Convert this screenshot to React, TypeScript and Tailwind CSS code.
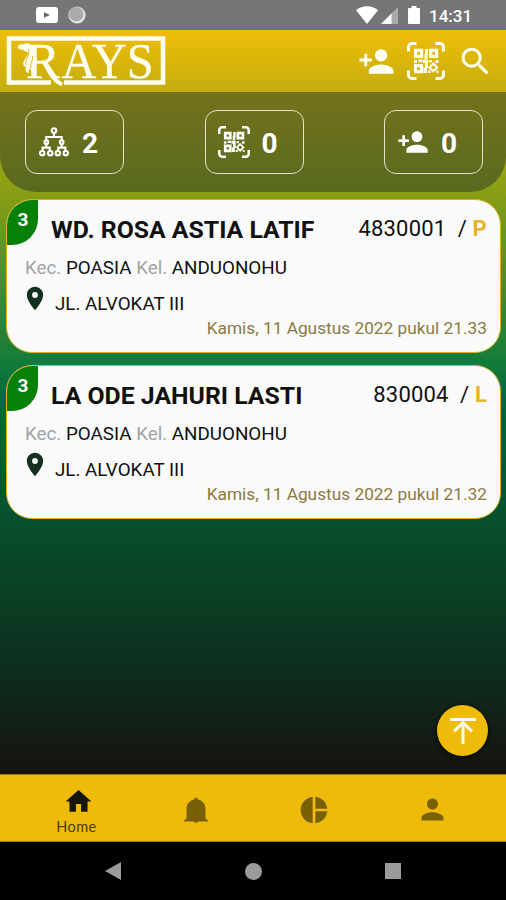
import React from 'react';
import {
  MdHome,
  MdLocationOn,
  MdPerson,
  MdPersonAdd,
  MdPieChart,
  MdSearch,
} from 'react-icons/md';

const members = [
  {
    level: 3,
    name: 'WD. ROSA ASTIA LATIF',
    code: '4830001',
    gender: 'P',
    kec: 'POASIA',
    kel: 'ANDUONOHU',
    address: 'JL. ALVOKAT III',
    date: 'Kamis, 11 Agustus 2022 pukul 21.33',
  },
  {
    level: 3,
    name: 'LA ODE JAHURI LASTI',
    code: '830004',
    gender: 'L',
    kec: 'POASIA',
    kel: 'ANDUONOHU',
    address: 'JL. ALVOKAT III',
    date: 'Kamis, 11 Agustus 2022 pukul 21.32',
  },
];

function QrIcon({ className }: { className?: string }) {
  return (
    <svg viewBox="0 0 38 38" className={className} fill="none" stroke="currentColor">
      <path
        strokeWidth="3"
        d="M1.5 9.5V5a3.5 3.5 0 0 1 3.5-3.5h4.5M28.5 1.5H33A3.5 3.5 0 0 1 36.5 5v4.5M36.5 28.5V33a3.5 3.5 0 0 1-3.5 3.5h-4.5M9.5 36.5H5A3.5 3.5 0 0 1 1.5 33v-4.5"
      />
      <path strokeWidth="3.2" d="M8.6 8.4h6v6h-6zM23.6 8.4h6v6h-6zM8.6 23.6h6v6h-6z" />
      <path
        fill="currentColor"
        stroke="none"
        d="M18 7h3v6h-3zM17.5 12h3v5h-3zM7 18h3v3H7zM11.5 17.5h4v2.8h-4zM16 17.5h5v3.5h-5zM18 20h3v6h-3zM16.5 25.5h3.5v5.5h-3.5zM22 18h3v2.5h-3zM28.5 18h3v3h-3zM29.5 28.5h2V31h-2zM21 28.5h2.5V31H21z"
      />
      <path strokeWidth="2.2" d="m26.3 21.5 3.9 3.9-3.9 3.9-3.9-3.9z" />
    </svg>
  );
}

function TreeIcon() {
  return (
    <svg viewBox="0 0 30 30" className="h-[30px] w-[30px]" fill="none" stroke="currentColor" strokeWidth="2.1">
      <circle cx="15" cy="3.5" r="2.3" />
      <path d="M15 6v4M7.3 13.5V10h15.4v3.5" />
      <circle cx="7.3" cy="15.2" r="1.8" />
      <circle cx="22.7" cy="15.2" r="1.8" />
      <path d="M7.3 17v3M3.6 24v-3.4h7.2V24M22.7 17v3M19.2 24v-3.4h7.2V24" />
      <circle cx="3.2" cy="26.2" r="2.2" />
      <circle cx="11.2" cy="26.2" r="2.2" />
      <circle cx="18.8" cy="26.2" r="2.2" />
      <circle cx="26.8" cy="26.2" r="2.2" />
    </svg>
  );
}

function StatusBar() {
  return (
    <div className="flex h-[30px] items-center bg-[#757575] pl-9 pr-[34px] text-white">
      <svg viewBox="0 0 22 16" className="h-4 w-[22px]">
        <rect width="22" height="16" rx="3" fill="#fff" />
        <path d="M8 5.2v5.6l6-2.8z" fill="#666" />
      </svg>
      <svg viewBox="0 0 18 18" className="ml-[10px] h-[18px] w-[18px]">
        <circle cx="9" cy="9" r="8.6" fill="#e6e6e6" />
        <circle cx="8.3" cy="8.2" r="7.2" fill="#aaa" />
      </svg>
      <svg viewBox="0 0 22 18" className="ml-auto h-[18px] w-[22px]">
        <path d="M0 4.2C6-1 16-1 22 4.2L11 18z" fill="#fff" />
      </svg>
      <svg viewBox="0 0 17 17" className="ml-[3px] mt-px h-[17px] w-[17px]">
        <path d="M17 0v17H0z" fill="#aaa" />
        <path d="M10.5 6.5V17H0z" fill="#fff" />
      </svg>
      <svg viewBox="0 0 12 18" className="ml-[10px] h-[18px] w-3">
        <path d="M3.5 0h5v2H11a1 1 0 0 1 1 1v14a1 1 0 0 1-1 1H1a1 1 0 0 1-1-1V3a1 1 0 0 1 1-1h2.5z" fill="#fff" />
      </svg>
      <span className="ml-[9px] mt-[2px] w-[43px] whitespace-nowrap text-[17px] font-medium leading-5">14:31</span>
    </div>
  );
}

function Logo() {
  return (
    <svg viewBox="0 0 160 62" className="ml-[6px] h-[62px] w-[160px] overflow-visible">
      <path d="M45 52.5H3V8.5h154v44H58" fill="none" stroke="#fffdf0" strokeWidth="4.6" />
      <g fill="#fffdf0" stroke="#fffdf0" strokeWidth="0.3" fontFamily="'Liberation Serif', serif">
        <text x="20" y="47.5" fontSize="51" textLength="34" lengthAdjust="spacingAndGlyphs">
          R
        </text>
        <text x="55.500" y="47.5" fontSize="50" textLength="92" lengthAdjust="spacingAndGlyphs">
          AYS
        </text>
      </g>
      {/* Tail of the R crossing the frame */}
      <path d="M38 32c5 8 8 18 18 22.500" fill="none" stroke="#fffdf0" strokeWidth="4" />
      {/* Figure leaning on the R */}
      <path
        d="M11.500 17c1-2.500 4-3 6-2.500 3-2.500 7-1 8.500 2.500 1.500 4 0 7 .500 10 2.500 3 3.500 8 2.500 11 0 3-1 6 0 9h-3c0-4-1-6-2-9-1 2-2 3-1 5-4 0-4-4-2.500-7-3 2-4-2-2.500-5 1-3 4-5 4-9-2 0-4-1-5-2.500-2 1-4-.500-5.500-2z"
        fill="#fffdf0"
      />
      <path d="M22 19c3 6-3 9-2 16M26.500 26c1 5-3 7-1.500 12" fill="none" stroke="#d6b50c" strokeWidth="0.9" />
    </svg>
  );
}

function Stat({ icon, value }: { icon: React.ReactNode; value: number }) {
  return (
    <div className="flex h-16 w-[99px] items-center rounded-xl border-[1.5px] border-[#e4e4cc] pl-[12px]">
      <div className="flex w-8 justify-center">{icon}</div>
      <span className="ml-[12px] mt-[3px] text-[28px] font-bold leading-none">{value}</span>
    </div>
  );
}

function MemberCard({ member }: { member: (typeof members)[number] }) {
  return (
    <div className="relative h-[154px] overflow-hidden rounded-[26px] border-[1.5px] border-[#d9b21c] bg-[#fafafa] text-[#111]">
      <div className="absolute left-0 top-0 flex h-[45px] w-[31px] justify-center rounded-br-[26px] bg-[#078007] pl-px pt-[9px] text-[19px] font-bold leading-[22px] text-white">
        {member.level}
      </div>
      <div className="flex items-center justify-between pl-[44px] pr-[13px] pt-[14px] leading-8">
        <span className="text-[24.8px] font-bold">{member.name}</span>
        <span className="-mt-[2px] whitespace-pre text-[22px] tracking-[0.2px]">
          {member.code}
          {'  / '}
          <span className="font-bold text-[#eab227]">{member.gender}</span>
        </span>
      </div>
      <p className="mt-[10px] pl-[18px] text-[18.8px] leading-6">
        <span className="text-[#a3a3a3]">Kec.</span> {member.kec} <span className="text-[#a3a3a3]">Kel.</span>{' '}
        {member.kel}
      </p>
      <div className="mt-[5px] flex h-[30px] pl-[14px]">
        <MdLocationOn className="-mt-px h-[29px] w-[28px] text-[#13301f]" />
        <span className="ml-[6px] mt-[7px] text-[18.8px] leading-6">{member.address}</span>
      </div>
      <p className="mt-[1px] pr-[13px] text-right text-[17.3px] leading-6 text-[#8c7a43]">{member.date}</p>
    </div>
  );
}

export default function App() {
  return (
    <div className="flex h-[900px] w-[506px] flex-col overflow-hidden bg-black font-['Roboto',sans-serif]">
      <StatusBar />

      <div className="relative flex h-[744px] flex-col bg-[linear-gradient(to_bottom,#f0bd08_0%,#c3ae0e_8.3%,#889e15_22%,#4c8c28_34%,#157d3a_44%,#00693c_50%,#07512f_65%,#0f2a1b_88%,#17130f_100%)]">
        {/* App bar */}
        <header className="flex h-[62px] shrink-0 items-center text-[#fffdf0]">
          <Logo />
          <div className="ml-auto flex items-center pr-[12px]">
            <MdPersonAdd className="h-[37px] w-[37px]" />
            <QrIcon className="ml-[12px] h-[38px] w-[38px]" />
            <MdSearch className="ml-[12px] h-[37px] w-[37px]" />
          </div>
        </header>

        {/* Counters */}
        <section className="flex h-[100px] shrink-0 justify-between rounded-b-[36px] bg-[#28352a]/50 pl-[25px] pr-[23px] pt-[18px] text-white">
          <Stat icon={<TreeIcon />} value={2} />
          <Stat icon={<QrIcon className="h-8 w-8" />} value={0} />
          <Stat icon={<MdPersonAdd className="h-8 w-8" />} value={0} />
        </section>

        <main className="flex flex-col gap-[12px] pl-[6px] pr-[5px] pt-[7px]">
          {members.map((member) => (
            <MemberCard key={member.code} member={member} />
          ))}
        </main>

        <button className="absolute bottom-[18px] right-[18px] flex h-[51px] w-[51px] items-center justify-center rounded-full bg-[#efbb09] shadow-[0_1px_4px_#000]">
          <svg viewBox="0 0 26 26" className="h-[26px] w-[26px]" fill="none" stroke="#fffdf0" strokeWidth="3">
            <path d="M0 1.5h26M13 26V4M4 13.5l9-9 9 9" />
          </svg>
        </button>
      </div>

      {/* Tabs */}
      <nav className="grid h-[68px] shrink-0 grid-cols-4 border-y border-[#9a7a0a] bg-[#efbb09] pl-[19px] pr-[15px] text-[#7a6005]">
        <div className="flex flex-col items-center pt-[11px] text-[#15150c]">
          <MdHome className="h-[31px] w-[31px]" />
          <span className="mt-[2px] pr-[3px] font-['Lato',sans-serif] text-[14.5px] leading-4 tracking-[0.4px] text-[#4c3c05]">
            Home
          </span>
        </div>
        <div className="flex items-center justify-center pt-[3px]">
          <svg viewBox="0 0 24 26" className="h-[26px] w-6" fill="currentColor">
            <path d="M10 2.500a2 2 0 0 1 4 0c4.500 1 7.500 4.500 7.500 9.500v9.500l2.500 2v1H0v-1l2.500-2V12c0-5 3-8.500 7.500-9.500zM10 24.600h4a2 1.200 0 0 1-4 0z" />
          </svg>
        </div>
        <div className="flex items-center justify-center pt-[3px]">
          <MdPieChart className="h-8 w-8" />
        </div>
        <div className="flex items-center justify-center pt-[3px]">
          <MdPerson className="h-[33px] w-[33px]" />
        </div>
      </nav>

      {/* System navigation */}
      <div className="flex h-[58px] shrink-0 items-center justify-between pl-[105px] pr-[105px]">
        <svg viewBox="0 0 16 18" className="h-[18px] w-4" fill="#9b9b9b">
          <path d="M16 0v18L0 9z" />
        </svg>
        <div className="h-[17px] w-[17px] rounded-full bg-[#9b9b9b]" />
        <div className="h-4 w-4 bg-[#9b9b9b]" />
      </div>
    </div>
  );
}
